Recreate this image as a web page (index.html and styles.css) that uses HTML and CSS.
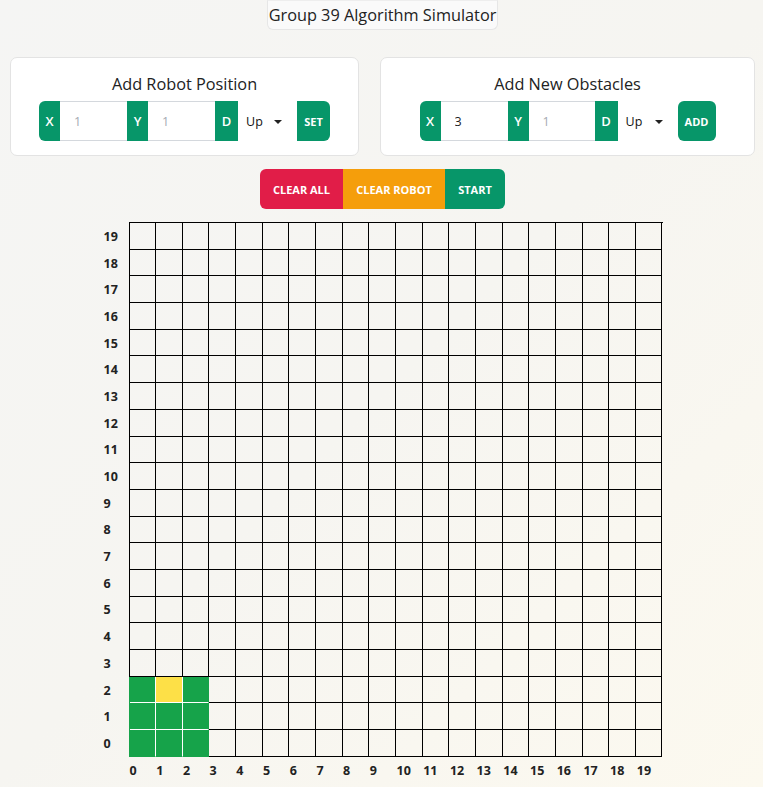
FILE: index.html
```html
<!DOCTYPE html>
<html>
<head>
<meta charset="utf-8">
<link rel="stylesheet" href="styles.css">
</head>
<body>
<div class="page">
  <div class="title-row"><h1 class="title">Group 39 Algorithm Simulator</h1></div>
  <div class="cards">
    <div class="card card-left">
      <h2 class="card-title">Add Robot Position</h2>
      <div class="igroup">
        <span class="lbl lbl-first">X</span>
        <input class="inp" placeholder="1">
        <span class="lbl">Y</span>
        <input class="inp" placeholder="1">
        <span class="lbl lbl-d">D</span>
        <div class="sel">Up<span class="caret"></span></div>
        <button class="act act-set">SET</button>
      </div>
    </div>
    <div class="card card-right">
      <h2 class="card-title">Add New Obstacles</h2>
      <div class="igroup">
        <span class="lbl lbl-first">X</span>
        <input class="inp" value="3">
        <span class="lbl">Y</span>
        <input class="inp inp-r2" placeholder="1">
        <span class="lbl lbl-d">D</span>
        <div class="sel sel-r">Up<span class="caret"></span></div>
        <button class="act act-add">ADD</button>
      </div>
    </div>
  </div>
  <div class="btns">
    <button class="btn btn-red">CLEAR ALL</button>
    <button class="btn btn-orange">CLEAR ROBOT</button>
    <button class="btn btn-green">START</button>
  </div>
  <div class="board">
    <div class="ylabels" id="ylabels"></div>
    <div class="main">
      <div class="grid" id="grid"></div>
      <div class="xlabels" id="xlabels"></div>
    </div>
  </div>
</div>
<script src="app.js"></script>
</body>
</html>
```
FILE: app.js
```js
(function () {
  var grid = document.getElementById('grid');
  var yl = document.getElementById('ylabels');
  var xl = document.getElementById('xlabels');
  for (var r = 19; r >= 0; r--) {
    var d = document.createElement('div');
    d.className = 'ylab';
    d.textContent = r;
    yl.appendChild(d);
    for (var c = 0; c < 20; c++) {
      var cell = document.createElement('div');
      var cls = 'cell';
      if (c <= 2 && r <= 2) {
        cls += (c === 1 && r === 2) ? ' robot-head' : ' robot';
        cls += (c === 2) ? ' rb-r' : ' rw-r';
        cls += (r === 0) ? ' rb-b' : ' rw-b';
        if (c === 0) cls += ' rb-l';
      }
      cell.className = cls;
      grid.appendChild(cell);
    }
  }
  for (var i = 0; i < 20; i++) {
    var x = document.createElement('div');
    x.className = 'xlab';
    x.textContent = i;
    xl.appendChild(x);
  }
})();
```
FILE: styles.css
```css
* { box-sizing: border-box; }
html, body { margin: 0; padding: 0; }
body {
  width: 763px;
  min-height: 787px;
  font-family: "Open Sans", "Noto Sans", sans-serif;
  color: #222;
  background: linear-gradient(135deg, #f5f5f4 0%, #f6f5f1 50%, #fcf9ef 100%);
}
.page { display: flex; flex-direction: column; align-items: center; padding-left: 2px; }
.title-row { display: flex; justify-content: center; }
.title {
  margin: 0;
  height: 30px;
  padding: 0 1px 1px 1px;
  display: flex; align-items: center;
  font-size: 16.3px;
  font-weight: 400;
  color: #222;
  background: #fafafa;
  border: 1px solid #e6e6e6;
  border-top-color: #eeeeee;
  border-radius: 0 0 6px 6px;
  width: 231px;
  justify-content: center;
  white-space: nowrap;
}
.cards {
  display: flex;
  gap: 21px;
  margin-top: 27px;
  width: 100%;
  padding: 0 8px 0 8px;
}
.card {
  height: 99px;
  background: #fff;
  border: 1px solid #e3e3e3;
  border-radius: 7px;
  display: flex; flex-direction: column; align-items: center;
}
.card-left { width: 350px; }
.card-right { width: 376px; }
.card-title {
  margin: 14px 0 0 0;
  font-size: 16.3px;
  font-weight: 400;
  line-height: 24px;
  color: #222;
}
.igroup {
  display: flex;
  height: 40px;
  margin-top: 5px;
  align-items: stretch;
}
.lbl {
  width: 21px;
  background: #079669;
  color: #fff;
  font-size: 13px;
  font-weight: 600;
  display: flex; align-items: center; justify-content: center;
}
.lbl-first { border-radius: 6px 0 0 6px; }
.lbl-d { width: 23px; }
.inp {
  width: 67px;
  border: 1px solid #d4d8dd;
  border-left: none; border-right: none;
  padding: 0 0 0 14px;
  font-family: inherit;
  font-size: 12.5px;
  color: #222;
  background: #fff;
  outline: none;
}
.inp::placeholder { color: #a5aab2; }
.inp-r2 { width: 66px; }
.sel {
  width: 59px;
  font-size: 12.5px;
  color: #111;
  display: flex; align-items: center;
  padding-left: 8px;
  position: relative;
}
.sel-r { width: 60px; }
.caret {
  position: absolute;
  right: 15px;
  top: 19px;
  width: 0; height: 0;
  border-left: 4px solid transparent;
  border-right: 4px solid transparent;
  border-top: 4px solid #222;
}
.act {
  border: none;
  background: #079669;
  color: #fff;
  font-family: inherit;
  font-size: 11px;
  font-weight: 700;
  border-radius: 0 6px 6px 0;
  padding: 0;
}
.act-set { width: 33px; }
.act-add { width: 38px; border-radius: 6px; }
.btns {
  display: flex;
  margin-top: 13px;
  height: 40px;
}
.btn {
  border: none;
  color: #fff;
  font-family: inherit;
  font-size: 11px;
  font-weight: 700;
  padding: 0;
}
.btn-red { width: 83px; background: #e11d48; border-radius: 6px 0 0 6px; }
.btn-orange { width: 102px; background: #f59e0b; }
.btn-green { width: 60px; background: #079669; border-radius: 0 6px 6px 0; }
.board {
  display: flex;
  margin-top: 13px;
  margin-left: 0;
}
.ylabels {
  width: 26px;
  display: grid;
  grid-template-rows: repeat(20, 26.7px);
  padding-top: 1px;
}
.ylab {
  font-size: 12.5px;
  font-weight: 700;
  color: #222;
  display: flex; align-items: center;
  padding-left: 1px;
}
.grid {
  width: 534px;
  display: grid;
  grid-template-columns: repeat(20, 1fr);
  grid-template-rows: repeat(20, 26.7px);
  border-top: 1px solid #000;
  border-left: 1px solid #000;
}
.cell {
  border-right: 1px solid #000;
  border-bottom: 1px solid #000;
}
.robot { background: #16a34a; }
.robot-head { background: #fde047; }
.rw-r { border-right-color: #fff; }
.rw-b { border-bottom-color: #fff; }
.rb-r { border-right-color: #16a34a; }
.rb-b { border-bottom-color: #16a34a; }
.rb-l { box-shadow: -1px 0 0 #16a34a; }
.xlabels {
  display: grid;
  grid-template-columns: repeat(20, 1fr);
  width: 534px;
  height: 27px;
}
.xlab {
  font-size: 12.5px;
  font-weight: 700;
  color: #222;
  display: flex; align-items: center;
  padding-left: 1px;
}
```
